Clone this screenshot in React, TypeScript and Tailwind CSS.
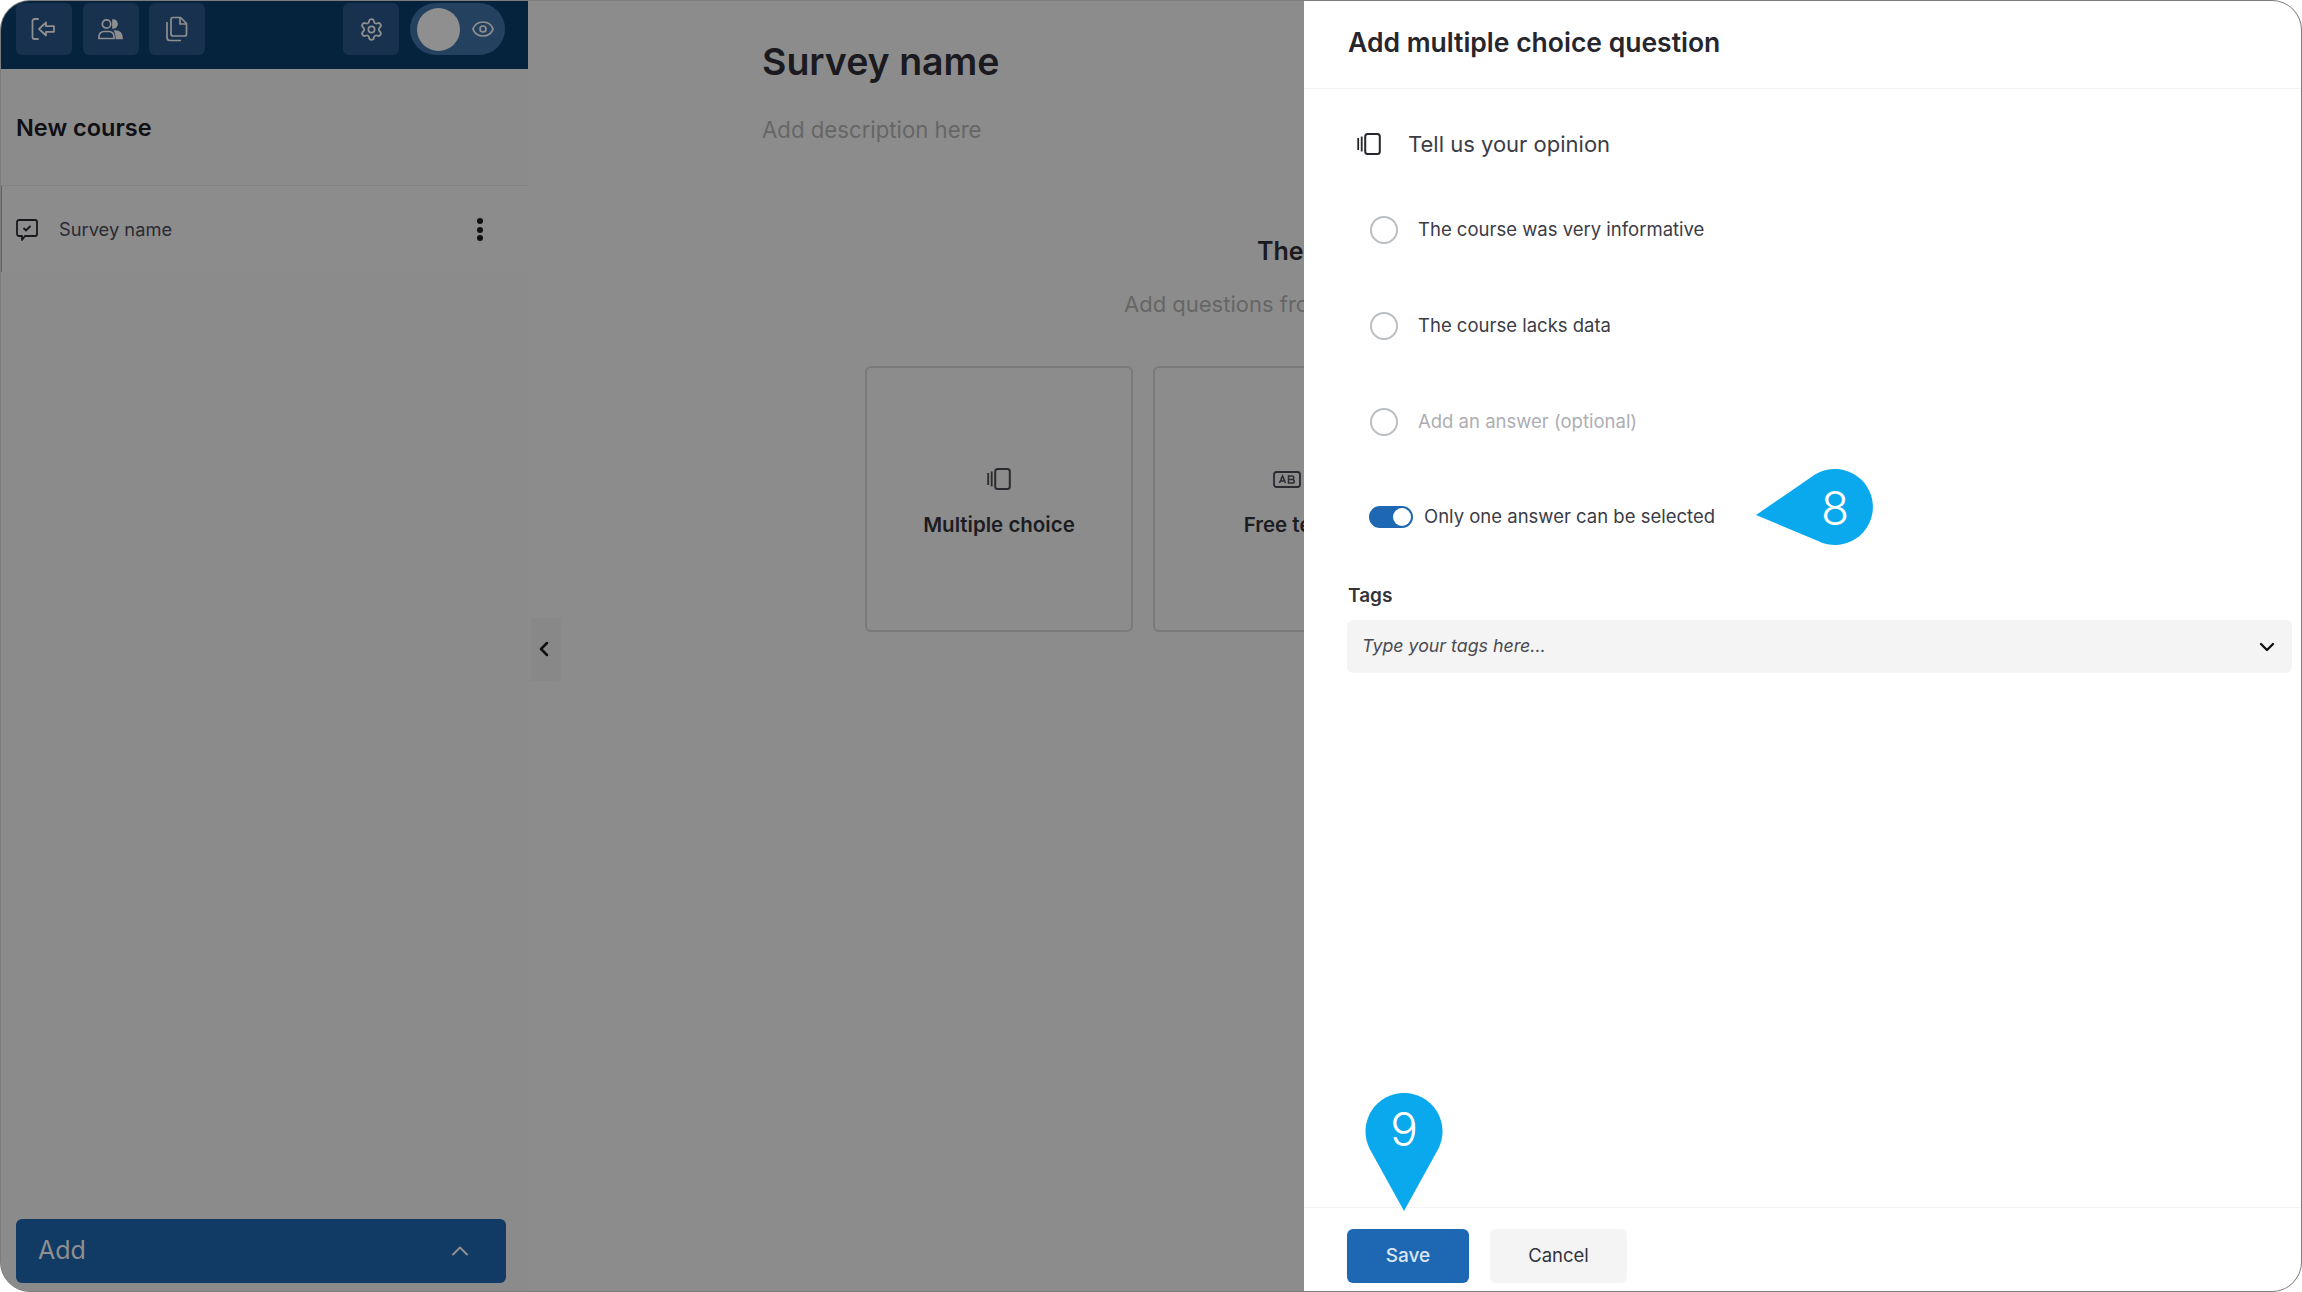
import React from "react";
import { ChevronDown, ChevronLeft, ChevronUp, Eye, Settings } from "lucide-react";

const font = "font-['Inter','Noto_Sans',sans-serif]";

function CardsIcon({ className }: { className?: string }) {
  return (
    <svg viewBox="0 0 24 22" fill="none" stroke="currentColor" className={className}>
      <rect x="8.2" y="1" width="14.6" height="20" rx="2.5" strokeWidth="2" />
      <path d="M1.2 5v12M4.7 3.5v15" strokeWidth="1.8" />
    </svg>
  );
}

function FreeTextIcon({ className }: { className?: string }) {
  return (
    <svg viewBox="0 0 28 17" fill="none" stroke="currentColor" className={className}>
      <rect x="1" y="1" width="26" height="15" rx="2.5" strokeWidth="1.8" />
      <path d="M6.5 12 9.5 5l3 7M7.5 10h4M15.5 5v7h4a1.8 1.8 0 0 0 0-3.6h-4 3.6a1.7 1.7 0 0 0 0-3.4z" strokeWidth="1.5" />
    </svg>
  );
}

function ExitIcon() {
  return (
    <svg viewBox="0 0 26 24" fill="none" stroke="currentColor" strokeWidth="1.8" strokeLinejoin="round" strokeLinecap="round" className="w-[26px] h-[24px] -ml-[2px]">
      <path d="M8 2H4.5A2 2 0 0 0 2.5 4v16a2 2 0 0 0 2 2H8" />
      <path d="M16 5.5 9 12l7 6.5v-3.7h8V9.2h-8z" />
    </svg>
  );
}

function UsersIcon() {
  return (
    <svg viewBox="0 0 25 22" fill="none" stroke="currentColor" strokeWidth="1.7" className="w-[25px] h-[22px]">
      <circle cx="8.5" cy="6" r="4.2" />
      <path d="M1 20.5v-2a5 5 0 0 1 5-5h5a5 5 0 0 1 5 5v2z" />
      <path d="M15 2a4 4 0 0 1 0 8z" fill="currentColor" />
      <path d="M17 13c4 0 7 2.500 7 7.500h-5.500c0-3-.5-5.500-1.500-7.500z" fill="currentColor" />
    </svg>
  );
}

function CopyIcon() {
  return (
    <svg viewBox="0 0 23 26" fill="none" stroke="currentColor" strokeWidth="1.7" strokeLinejoin="round" className="w-[23px] h-[26px] -ml-[1px]">
      <path d="M8 1.500h7.500L21.500 7.500V18a2 2 0 0 1-2 2H8a2 2 0 0 1-2-2V3.500a2 2 0 0 1 2-2z" />
      <path d="M15 1.500v6.500h6.500" />
      <path d="M2 6v15.500a3 3 0 0 0 3 3h11" />
    </svg>
  );
}

function SurveyIcon() {
  return (
    <svg viewBox="0 0 22 22" fill="none" stroke="currentColor" className="w-[22px] h-[22px] text-[#17171c]">
      <path d="M3 1h16a2 2 0 0 1 2 2v12a2 2 0 0 1-2 2H9l-3 4v-4H3a2 2 0 0 1-2-2V3a2 2 0 0 1 2-2z" strokeWidth="1.8" strokeLinejoin="round" />
      <path d="m7.500 9 2.500 2.500 4.500-4.500" strokeWidth="1.800" />
    </svg>
  );
}

function HeaderButton({ children }: { children: React.ReactNode }) {
  return <div className="w-[56px] h-[52px] rounded-[6px] bg-[#17314e] flex items-center justify-center text-[#8f8f8f]">{children}</div>;
}

function Card({ icon, label }: { icon: React.ReactNode; label: string }) {
  return (
    <div className="w-[268px] h-[266px] shrink-0 rounded-[6px] border-2 border-[#7a7a7a] flex flex-col items-center pt-[97px]">
      <div className="h-[28px] flex items-center">{icon}</div>
      <div className="mt-[18px] text-[20.500px] leading-[28px] font-semibold text-[#1c1c22] whitespace-nowrap">{label}</div>
    </div>
  );
}

function AnswerRow({ label, muted }: { label: string; muted?: boolean }) {
  return (
    <div className="h-[96px] flex items-center pl-[66px]">
      <span className="w-[28px] h-[28px] rounded-full border-2 border-[#bcbfc2]" />
      <span className={`ml-[20px] text-[18.500px] ${muted ? "text-[#adadb3]" : "text-[#3c3c46]"}`}>{label}</span>
    </div>
  );
}

export default function App() {
  return (
    <div className={`w-[2302px] h-[1292px] bg-white ${font}`}>
      <div className="relative w-full h-full flex rounded-[30px] border border-[#7c7c7c] overflow-hidden bg-[#8c8c8c]">
        <aside className="w-[527px] shrink-0 flex flex-col bg-[#8b8b8b]">
          <div className="h-[68px] shrink-0 bg-[#06233e] flex items-start pt-[2px] pl-[15px]">
            <div className="flex gap-[10.500px]">
              <HeaderButton><ExitIcon /></HeaderButton>
              <HeaderButton><UsersIcon /></HeaderButton>
              <HeaderButton><CopyIcon /></HeaderButton>
            </div>
            <div className="ml-[138px]">
              <HeaderButton><Settings className="w-[25px] h-[25px]" strokeWidth={1.7} /></HeaderButton>
            </div>
            <div className="ml-[11px] w-[95px] h-[52px] rounded-full bg-[#24415f] flex items-center pl-[7px] text-[#8f8f8f]">
              <span className="w-[43px] h-[43px] rounded-full bg-[#8f8f8f]" />
              <Eye className="ml-[11px] w-[24px] h-[24px]" strokeWidth={1.7} />
            </div>
          </div>
          <div className="h-[117px] shrink-0 flex items-center pt-[2px] pl-[15px] border-b border-[#838383] text-[23.500px] font-semibold text-[#0f0f14]">
            New course
          </div>
          <div className="h-[86px] shrink-0 flex items-center pt-[1px] pl-[14px] pr-[45px] border-l border-[#5d6670] bg-[#8c8c8c]">
            <SurveyIcon />
            <span className="ml-[21px] text-[18.300px] text-[#2a2a32]">Survey name</span>
            <div className="ml-auto flex flex-col gap-[2.500px]">
              <span className="w-[6px] h-[6px] rounded-full bg-[#0f0f14]" />
              <span className="w-[6px] h-[6px] rounded-full bg-[#0f0f14]" />
              <span className="w-[6px] h-[6px] rounded-full bg-[#0f0f14]" />
            </div>
          </div>
          <div className="mt-auto mb-[8px] ml-[15px] w-[490px] h-[64px] rounded-[6px] bg-[#113a64] flex items-center justify-between pl-[22px] pr-[32px] text-[25px] text-[#8f8f8f]">
            Add
            <ChevronUp className="w-[28px] h-[28px]" strokeWidth={1.7} />
          </div>
        </aside>

        <main className="relative w-[776px] shrink-0 overflow-hidden">
          <div className="absolute left-[3px] top-[617px] w-[30px] h-[63px] rounded-r-[4px] bg-[#888888] flex items-center justify-center text-[#0f0f14]">
            <ChevronLeft className="w-[24px] h-[24px] -ml-[4px] -mt-[2px]" strokeWidth={2.500} />
          </div>
          <h1 className="pl-[234px] pt-[37px] text-[37.500px] leading-[48px] font-semibold text-[#1a1a20] whitespace-nowrap">Survey name</h1>
          <p className="pl-[234px] mt-[29px] text-[22.200px] leading-[30px] text-[#666666] whitespace-nowrap">Add description here</p>
          <p className="pl-[729px] mt-[89px] text-[25px] leading-[34px] font-semibold text-[#1a1a20] whitespace-nowrap">The survey is empty</p>
          <p className="pl-[596px] mt-[21px] text-[22px] leading-[30px] text-[#666666] whitespace-nowrap">Add questions from the panel</p>
          <div className="mt-[47px] pl-[337px] flex gap-[20px]">
            <Card icon={<CardsIcon className="w-[24px] h-[22px] text-[#2a2a30]" />} label="Multiple choice" />
            <Card icon={<FreeTextIcon className="w-[28px] h-[17px] text-[#2a2a30]" />} label="Free text" />
          </div>
        </main>

        <section className="relative w-[997px] shrink-0 flex flex-col bg-white">
          <div className="h-[88px] shrink-0 flex items-center pb-[4px] pl-[44px] border-b border-[#f3f3f3] text-[26.500px] font-semibold text-[#26262c]">
            Add multiple choice question
          </div>
          <div className="mt-[41px] h-[28px] flex items-center pl-[53px]">
            <CardsIcon className="w-[24px] h-[22px] text-[#26262c]" />
            <span className="ml-[27px] text-[22px] text-[#3c3c46]">Tell us your opinion</span>
          </div>
          <div className="mt-[24px]">
            <AnswerRow label="The course was very informative" />
            <AnswerRow label="The course lacks data" />
            <AnswerRow label="Add an answer (optional)" muted />
          </div>
          <div className="mt-[25px] h-[44px] flex items-center pl-[65px]">
            <span className="w-[44px] h-[22px] rounded-full bg-[#1e68b3] flex items-center justify-end pr-[2px]">
              <span className="w-[18px] h-[18px] rounded-full bg-white" />
            </span>
            <span className="ml-[11px] text-[18.500px] text-[#3c3c46]">Only one answer can be selected</span>
          </div>
          <div className="mt-[45px] pl-[44px] h-[24px] flex items-center text-[19px] font-semibold text-[#33333a]">Tags</div>
          <div className="mt-[12px] ml-[43px] mr-[9px] h-[53px] rounded-[6px] bg-[#f4f4f4] flex items-center justify-between pl-[15px] pr-[13px] text-[#0f0f14]">
            <span className="italic text-[17.800px] text-[#4b4b52]">Type your tags here...</span>
            <ChevronDown className="w-[24px] h-[24px]" strokeWidth={2.300} />
          </div>
          <div className="mt-auto mb-[8px] border-t border-[#f3f3f3] pt-[21px] pl-[43px] flex gap-[21px] text-[19px]">
            <div className="w-[122px] h-[54px] rounded-[6px] bg-[#1e68b3] text-[#dbe6f2] font-medium flex items-center justify-center">Save</div>
            <div className="w-[137px] h-[54px] rounded-[6px] bg-[#f4f4f4] text-[#33333a] text-[18.500px] flex items-center justify-center">Cancel</div>
          </div>

          {/* tutorial callouts over the drawer */}
          <div className="absolute left-[452px] top-[468px] w-[118px] h-[78px]">
            <svg viewBox="0 0 118 78" className="w-full h-full fill-[#0aa9ee]">
              <path d="M0 46 L59 5.600 A38 38 0 1 1 62 72 Z" />
            </svg>
            <span className="absolute left-[60px] top-0 w-[38px] h-[78px] flex items-center justify-center text-[46px] font-light text-white">8</span>
          </div>
          <div className="absolute left-[61px] top-[1092px] w-[78px] h-[120px]">
            <svg viewBox="0 0 78 120" className="w-full h-full fill-[#0aa9ee]">
              <path d="M39 118 L4.500 55.500 A38.500 38.500 0 1 1 73.500 55.500 Z" />
            </svg>
            <span className="absolute left-0 top-0 w-[78px] h-[72px] flex items-center justify-center text-[46px] font-light text-white">9</span>
          </div>
        </section>
      </div>
    </div>
  );
}
